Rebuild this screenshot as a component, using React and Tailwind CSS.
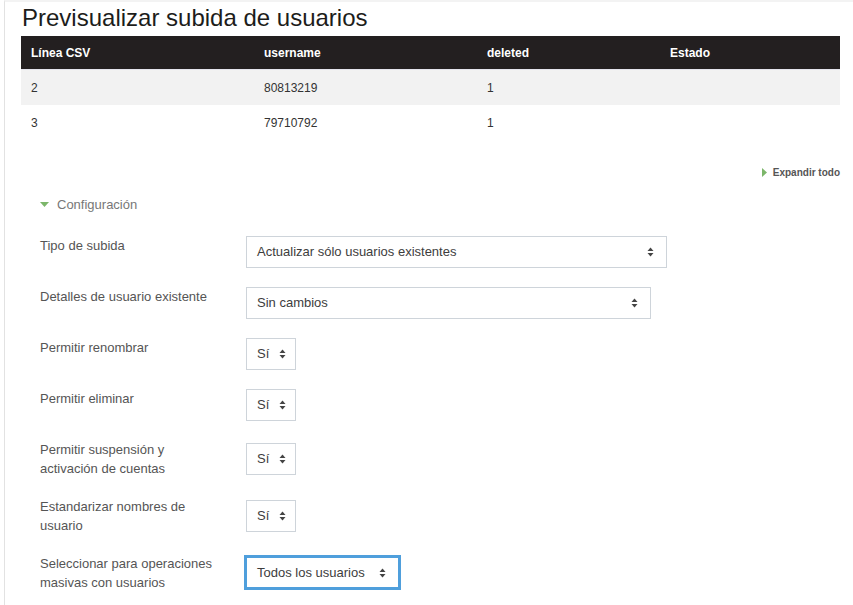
import React from 'react';

const font = { fontFamily: '"Liberation Sans", Arial, sans-serif' };

const Arrows = () => (
  <svg width="7" height="10" viewBox="0 0 7 10" className="shrink-0">
    <path d="M3.5 0.5 L6.5 4 L0.5 4 Z" fill="#444" />
    <path d="M0.5 6 L6.5 6 L3.5 9.5 Z" fill="#444" />
  </svg>
);

const Select = ({ value, width, focused, twoLine }) => {
  const narrow = width < 60;
  return (
    <div
      className={
        focused
          ? 'flex items-center justify-between h-[35px] pl-[10px] pr-[12px] bg-white border-[3px] border-[#4f9fdc] -ml-[2px] mt-[1px]'
          : `flex items-center justify-between h-[32px] pl-[10px] bg-white border border-[#ced4da] ${narrow ? 'pr-[9px]' : 'pr-[12px]'} ${twoLine ? 'mt-[3px]' : ''}`
      }
      style={{ width }}
    >
      <span className="text-[13px] text-[#3d3d3d] whitespace-nowrap">{value}</span>
      <Arrows />
    </div>
  );
};

const rows = [
  { label: 'Tipo de subida', value: 'Actualizar sólo usuarios existentes', width: 421 },
  { label: 'Detalles de usuario existente', value: 'Sin cambios', width: 405 },
  { label: 'Permitir renombrar', value: 'Sí', width: 50 },
  { label: 'Permitir eliminar', value: 'Sí', width: 50 },
  { label: 'Permitir suspensión y activación de cuentas', value: 'Sí', width: 50, twoLine: true },
  { label: 'Estandarizar nombres de usuario', value: 'Sí', width: 50, twoLine: true },
  { label: 'Seleccionar para operaciones masivas con usuarios', value: 'Todos los usuarios', width: 157, focused: true },
];

const cols = ['w-[233px]', 'w-[223px]', 'w-[183px]', 'flex-1'];

export default function App() {
  return (
    <div className="w-[853px] h-[605px] bg-white overflow-hidden" style={font}>
      <div className="ml-[4px] h-full border-l border-[#e2e2e2] border-t-2 border-t-[#f3f3f3] pl-[16px] pr-[13px]">
        <h2 className="text-[24px] leading-[29px] text-[#1d1d1b] pt-[1px] mb-[4px] pl-[1px]">
          Previsualizar subida de usuarios
        </h2>

        {/* preview table */}
        <div className="w-[819px]">
          <div className="flex h-[34px] items-center bg-[#231f20] border-b border-[#e4e4ec] text-white text-[12px] font-bold">
            {['Línea CSV', 'username', 'deleted', 'Estado'].map((h, i) => (
              <div key={h} className={`${cols[i]} pl-[10px]`}>{h}</div>
            ))}
          </div>
          {[['2', '80813219', '1'], ['3', '79710792', '1']].map((r, j) => (
            <div key={j} className={`flex h-[35px] items-center text-[12px] text-[#333] ${j === 0 ? 'bg-[#f2f2f2]' : 'bg-white'}`}>
              {[...r, ''].map((c, i) => (
                <div key={i} className={`${cols[i]} pl-[10px]`}>{c}</div>
              ))}
            </div>
          ))}
        </div>

        <div className="flex justify-end items-center gap-[6px] mt-[25px] w-[819px]">
          <svg width="5" height="9" viewBox="0 0 5 9">
            <path d="M0 0 L5 4.5 L0 9 Z" fill="#7cb66a" />
          </svg>
          <span className="text-[10px] font-bold text-[#555]">Expandir todo</span>
        </div>

        <div className="pl-[19px] mt-[15px]">
          <div className="flex items-center gap-[8px] h-[19px]">
            <svg width="9" height="5" viewBox="0 0 9 5">
              <path d="M0 0 L9 0 L4.5 5 Z" fill="#7cb66a" />
            </svg>
            <span className="text-[13px] text-[#777]">Configuración</span>
          </div>

          <div className="mt-[22px] flex flex-col gap-[19px]">
            {rows.map((r) => (
              <div key={r.label} className="flex items-start">
                <div className="w-[206px] pr-[26px] text-[13px] leading-[19px] text-[#555]">{r.label}</div>
                <Select value={r.value} width={r.width} focused={r.focused} twoLine={r.twoLine} />
              </div>
            ))}
          </div>
        </div>
      </div>
    </div>
  );
}
